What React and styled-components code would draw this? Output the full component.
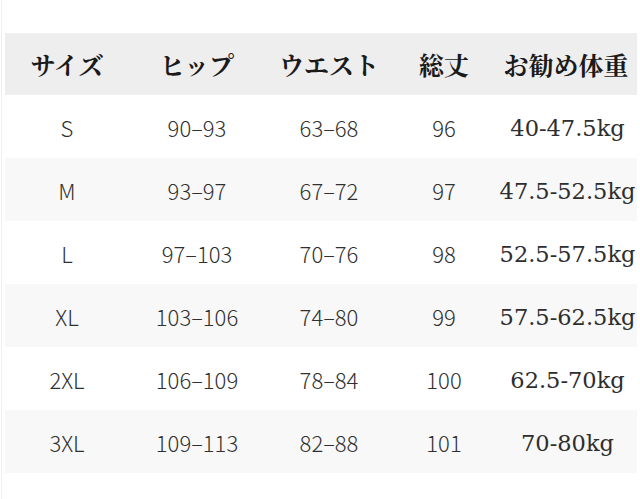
import styled, { createGlobalStyle } from 'styled-components'

const GlobalStyle = createGlobalStyle`
  html, body {
    margin: 0;
    padding: 0;
    background: #ffffff;
  }
`

const Page = styled.div`
  width: 640px;
  height: 499px;
  box-sizing: border-box;
  padding: 33px 4px 0 3px;
  border-left: 1px solid #f0f0f0;
  margin-left: 1px;
  overflow: hidden;
`

const Table = styled.div`
  display: grid;
  grid-template-columns: 124px 136px 128px 102px 1fr;
`

const Row = styled.div`
  display: contents;

  & > div {
    background: ${(props) => props.$bg};
    height: ${(props) => props.$h}px;
  }
`

const Cell = styled.div`
  box-sizing: border-box;
  display: flex;
  align-items: center;
  justify-content: center;
  color: #303030;
  font-family: 'Noto Sans CJK SC', 'Noto Sans', sans-serif;
  font-weight: 300;
  font-size: 22px;
  white-space: nowrap;
`

const HeadCell = styled(Cell)`
  font-family: 'Noto Serif CJK JP', 'Noto Sans CJK JP', serif;
  font-weight: 700;
  font-size: 25px;
  color: #1a1a1a;
`

const WeightCell = styled(Cell)`
  font-family: 'DejaVu Serif', 'Liberation Serif', serif;
  font-weight: 400;
  font-size: 22.5px;
  color: #2e2e2e;
  padding: 2px 0 0 3px;
`

const headers = ['サイズ', 'ヒップ', 'ウエスト', '総丈', 'お勧め体重']

const rows = [
  ['S', '90–93', '63–68', '96', '40-47.5kg'],
  ['M', '93–97', '67–72', '97', '47.5-52.5kg'],
  ['L', '97–103', '70–76', '98', '52.5-57.5kg'],
  ['XL', '103–106', '74–80', '99', '57.5-62.5kg'],
  ['2XL', '106–109', '78–84', '100', '62.5-70kg'],
  ['3XL', '109–113', '82–88', '101', '70-80kg'],
]

export default function App() {
  return (
    <>
      <GlobalStyle />
      <Page>
        <Table>
          <Row $bg="#eeeeee" $h={62}>
            {headers.map((h) => (
              <HeadCell key={h}>{h}</HeadCell>
            ))}
          </Row>
          {rows.map((r, i) => (
            <Row key={r[0]} $bg={i % 2 ? '#f8f8f8' : '#ffffff'} $h={63}>
              {r.slice(0, 4).map((v, j) => (
                <Cell key={j}>{v}</Cell>
              ))}
              <WeightCell>{r[4]}</WeightCell>
            </Row>
          ))}
        </Table>
      </Page>
    </>
  )
}
